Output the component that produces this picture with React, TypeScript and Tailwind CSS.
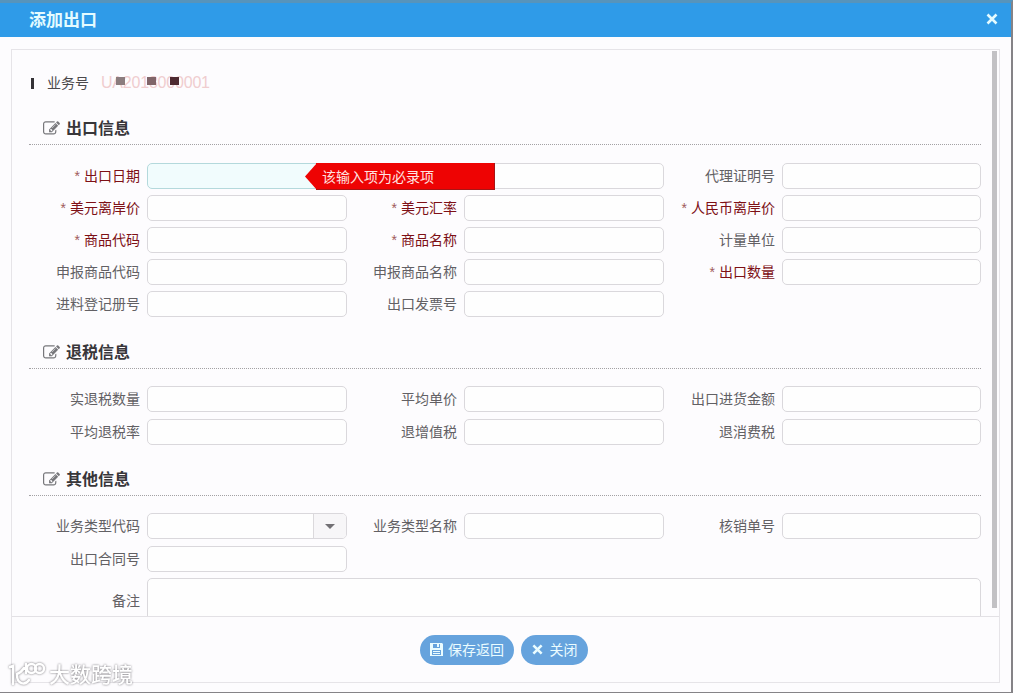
import React from 'react';

type FieldProps = {
  label?: string;
  required?: boolean;
  active?: boolean;
  select?: boolean;
};

function EditIcon() {
  return (
    <svg viewBox="0 0 1792 1792" className="h-[17px] w-[17px] shrink-0 fill-[#77777b]">
      <path d="M888 1184l116-116-152-152-116 116v56h96v96h56zm440-720q-16-16-33 1l-350 350q-17 17-1 33t33-1l350-350q17-17 1-33zm80 594v190q0 119-84.5 203.5t-203.5 84.5h-832q-119 0-203.5-84.5t-84.5-203.5v-832q0-119 84.5-203.5t203.5-84.5h832q63 0 117 25 15 7 18 23 3 17-9 29l-49 49q-14 14-32 8-23-6-45-6h-832q-66 0-113 47t-47 113v832q0 66 47 113t113 47h832q66 0 113-47t47-113v-126q0-13 9-22l64-64q15-15 35-7t20 29zm-96-738l288 288-672 672h-288v-288zm444 132l-92 92-288-288 92-92q28-28 68-28t68 28l152 152q28 28 28 68t-28 68z" />
    </svg>
  );
}

function CloseIcon({ className }: { className: string }) {
  return (
    <svg viewBox="0 0 12 12" className={className}>
      <path d="M1.5 1.5l9 9M10.5 1.5l-9 9" />
    </svg>
  );
}

function SaveIcon() {
  return (
    <svg viewBox="0 0 13 13" className="h-[13px] w-[13px]">
      <path fill="#eafcff" fillRule="evenodd" d="M0 0h12l1 1v12H0zM3 1v4h7V1zM2 7v5h9V7z" />
      <path fill="#eafcff" d="M7 1h2v3H7zM3 8h7v1H3zM3 10h7v1H3z" />
    </svg>
  );
}

function Section({ title }: { title: string }) {
  return (
    <div className="flex h-[33px] items-center border-b border-dotted border-[#a3a1a4] pl-[14px]">
      <EditIcon />
      <h3 className="ml-[6px] pt-px text-base leading-none font-bold text-[#38363a]">{title}</h3>
    </div>
  );
}

function Label({ label, required }: FieldProps) {
  return (
    <label
      className={
        required
          ? 'flex-1 pr-[7px] text-right text-sm leading-[27px] whitespace-nowrap text-[#7d1016]'
          : 'flex-1 pr-[7px] text-right text-sm leading-[27px] whitespace-nowrap text-[#626064]'
      }
    >
      {required && <span className="mr-[4px] text-[#a05a5c]">*</span>}
      {label}
    </label>
  );
}

function Field(props: FieldProps) {
  return (
    <div className="flex">
      <Label {...props} />
      <div
        className={
          props.active
            ? 'relative flex h-[26px] w-[200px] justify-end rounded-[5px] border border-[#b4d9dc] bg-[#f1fcfd]'
            : 'relative flex h-[26px] w-[200px] justify-end rounded-[5px] border border-[#dad8dc] bg-[#fefefe] group-nth-[3n]:w-[199px]'
        }
      >
        {props.select && (
          <div className="flex w-[33px] items-center justify-center rounded-r-[4px] border-l border-[#dbd9dc] bg-[#f7f6f8]">
            <svg viewBox="0 0 10 5" className="h-[5px] w-[10px] fill-[#727074]">
              <path d="M0 0h10L5 5z" />
            </svg>
          </div>
        )}
        {/*  Validation tip  */}
        {props.active && (
          <div className="absolute -top-px left-[157px] z-10 flex h-[27px] w-[190px]">
            <svg viewBox="0 0 12 27" className="h-[27px] w-3 fill-[#ee0303]">
              <path d="M12 0v27L0 13.5z" />
            </svg>
            <div className="-ml-px flex-1 border-r border-b border-[#a81515] bg-[#ee0303] pl-[6px] text-sm leading-[28px] text-[#ffe3e1]">
              该输入项为必录项
            </div>
          </div>
        )}
      </div>
    </div>
  );
}

const exportInfo: FieldProps[] = [
  { label: '出口日期', required: true, active: true },
  {},
  { label: '代理证明号' },
  { label: '美元离岸价', required: true },
  { label: '美元汇率', required: true },
  { label: '人民币离岸价', required: true },
  { label: '商品代码', required: true },
  { label: '商品名称', required: true },
  { label: '计量单位' },
  { label: '申报商品代码' },
  { label: '申报商品名称' },
  { label: '出口数量', required: true },
  { label: '进料登记册号' },
  { label: '出口发票号' },
];

const refundInfo: FieldProps[] = [
  { label: '实退税数量' },
  { label: '平均单价' },
  { label: '出口进货金额' },
  { label: '平均退税率' },
  { label: '退增值税' },
  { label: '退消费税' },
];

const otherInfo: FieldProps[] = [
  { label: '业务类型代码', select: true },
  { label: '业务类型名称' },
  { label: '核销单号' },
  { label: '出口合同号' },
];

function Fields({ items, className }: { items: FieldProps[]; className: string }) {
  return (
    <div className={className}>
      {items.map((item, i) => (
        <div key={i} className="group h-[26px]">
          <Field {...item} />
        </div>
      ))}
    </div>
  );
}

export default function App() {
  return (
    <div className="relative flex h-[693px] w-[1013px] flex-col overflow-hidden border-t-[3px] border-r-2 border-b border-t-[#5794bb] border-r-[#858387] border-b-[#858387] bg-[#fdfcfe] font-['Liberation_Sans','Noto_Sans_CJK_SC',sans-serif]">
      {/*  Title bar  */}
      <div className="flex h-[34px] shrink-0 items-center justify-between bg-[#2f9be8] pr-[13px] pl-[29px]">
        <h2 className="text-[17px] leading-none font-bold text-[#e4fbff]">添加出口</h2>
        <CloseIcon className="mb-[2px] h-3 w-3 stroke-[#e4fbff] stroke-[2.6]" />
      </div>

      <div className="mt-3 mr-[11px] mb-[9px] ml-[11px] flex min-h-0 flex-1 flex-col border border-[#e6e4e8]">
        {/*  Scrollable form  */}
        <div className="flex h-[567px] shrink-0 overflow-hidden border-b border-[#e3e1e5]">
          <div className="w-[969px] pl-[17px]">
            <div className="flex h-[62px] items-center pt-[4px]">
              <span className="ml-[2px] h-[11px] w-[3px] bg-[#343236]" />
              <span className="ml-[13px] text-sm leading-none text-[#4b494c]">业务号</span>
              <div className="relative ml-3 text-base leading-none tracking-[-0.2px] text-[#f0cdcf]">
                <span>UA2018000001</span>
                <div className="absolute top-[2px] left-[15px] flex">
                  <span className="h-2 w-[9px] bg-[#8b7c7e]" />
                  <span className="ml-[22px] h-2 w-[9px] bg-[#806569]" />
                  <span className="ml-[14px] h-2 w-[9px] bg-[#4e2a31]" />
                </div>
              </div>
            </div>
            <Section title="出口信息" />
            <Fields items={exportInfo} className="grid grid-cols-[318px_317px_317px] gap-y-[6px] pt-[18px]" />
            <div className="h-[19px]" />
            <Section title="退税信息" />
            <Fields items={refundInfo} className="grid grid-cols-[318px_317px_317px] gap-y-[7px] pt-[17px]" />
            <div className="h-[18px]" />
            <Section title="其他信息" />
            <Fields items={otherInfo} className="grid grid-cols-[318px_317px_317px] gap-y-[7px] pt-[17px]" />
            <div className="mt-[6px] flex h-[60px]">
              <div className="flex w-[118px] pt-[10px]">
                <Label label="备注" />
              </div>
              <div className="flex-1 rounded-[5px] border border-[#dad8dc] bg-[#fefefe]" />
            </div>
          </div>
          <div className="mt-px ml-[11px] h-[557px] w-[5px] bg-[#c2c1c4]" />
        </div>

        {/*  Footer buttons  */}
        <div className="flex flex-1 items-center justify-center gap-[7px] pr-[3px]">
          <button className="flex h-[30px] w-[94px] items-center justify-center gap-[5px] rounded-full bg-[#66a3dd] text-sm text-[#eafcff]">
            <SaveIcon />
            保存返回
          </button>
          <button className="flex h-[30px] w-[67px] items-center justify-center gap-[7px] rounded-full bg-[#66a3dd] text-sm text-[#eafcff]">
            <CloseIcon className="h-[11px] w-[11px] stroke-[#eafcff] stroke-[2.8]" />
            关闭
          </button>
        </div>
      </div>

      {/*  Watermark  */}
      <div className="absolute bottom-[5px] left-[8px] flex items-center text-white">
        <svg
          viewBox="0 0 38 26"
          className="h-[26px] w-[38px] fill-none stroke-white stroke-[2.4] drop-shadow-[0_0_1px_#77757a]"
          strokeLinecap="round"
        >
          <path d="M2 6l3-1v18M16 7c-2 3-4 5-7 6M9 14c0 9 8 11 12 5M18 3v9" />
          <circle cx="23.5" cy="7.5" r="4.5" />
          <circle cx="31.5" cy="7.5" r="4.5" />
        </svg>
        <span className="ml-[3px] text-[21px] leading-none font-medium drop-shadow-[0_0_1px_#77757a]">大数跨境</span>
      </div>
    </div>
  );
}
